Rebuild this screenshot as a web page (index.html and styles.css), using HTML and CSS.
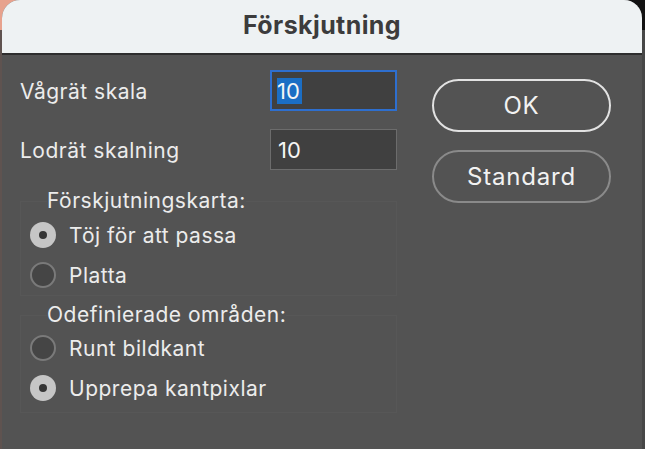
FILE: index.html
```html
<!DOCTYPE html>
<html>
<head>
<meta charset="utf-8">
<link rel="stylesheet" href="styles.css">
</head>
<body>
<div class="page">
  <div class="dialog">
    <div class="titlebar">Förskjutning</div>
    <div class="content">
      <div class="form">
        <div class="row">
          <span class="label">Vågrät skala</span>
          <div class="field focused"><span class="sel">10</span></div>
        </div>
        <div class="row row2">
          <span class="label">Lodrät skalning</span>
          <div class="field"><span>10</span></div>
        </div>
        <fieldset class="group g1">
          <legend>Förskjutningskarta:</legend>
          <div class="opt"><span class="radio on"></span><span>Töj för att passa</span></div>
          <div class="opt"><span class="radio"></span><span>Platta</span></div>
        </fieldset>
        <fieldset class="group g2">
          <legend>Odefinierade områden:</legend>
          <div class="opt"><span class="radio"></span><span>Runt bildkant</span></div>
          <div class="opt"><span class="radio on"></span><span>Upprepa kantpixlar</span></div>
        </fieldset>
      </div>
      <div class="buttons">
        <div class="btn primary">OK</div>
        <div class="btn">Standard</div>
      </div>
    </div>
  </div>
</div>
</body>
</html>
```
FILE: styles.css
```css
html, body {
  margin: 0;
  padding: 0;
}
body {
  width: 645px;
  height: 449px;
  overflow: hidden;
  font-family: Inter, "Liberation Sans", sans-serif;
}
.page {
  width: 645px;
  height: 449px;
  background:
    linear-gradient(to right, #e7a28d 0 50%, #121212 50% 100%) top / 100% 30px no-repeat,
    linear-gradient(to right, #5f5350 0 2px, #535353 2px 642px, #474747 642px);
}
.dialog {
  margin-left: 2px;
  width: 640px;
  height: 449px;
  border-radius: 18px 18px 0 0;
  overflow: hidden;
  background: #535353;
}
.titlebar {
  height: 55px;
  box-sizing: border-box;
  background: #eef2f3;
  border-bottom: 2px solid #2e2e2e;
  display: flex;
  align-items: center;
  justify-content: center;
  font-size: 25px;
  font-weight: 700;
  letter-spacing: 0.4px;
  color: #3c3c3c;
  padding-bottom: 4px;
}
.content {
  display: flex;
  padding: 15px 0 0 18px;
  color: #ececec;
  font-size: 21px;
  letter-spacing: 0.5px;
}
.form {
  width: 377px;
}
.row {
  display: flex;
  justify-content: space-between;
  align-items: center;
  height: 41px;
}
.row2 {
  margin-top: 18px;
}
.label {
  padding-top: 1px;
}
.field {
  width: 127px;
  height: 41px;
  box-sizing: border-box;
  border: 1px solid #6c6c6c;
  background: #404040;
  display: flex;
  align-items: center;
  padding-left: 7px;
  color: #f5f5f5;
  font-size: 22px;
  letter-spacing: 0;
}
.field.focused {
  border: 2px solid #2e6fcf;
  padding-left: 5px;
}
.sel {
  background: #1b6ec4;
  line-height: 26px;
  padding-right: 2px;
}
.group {
  margin: 0;
  padding: 0;
  border: 1px solid #575757;
  min-width: 0;
}
.group legend {
  margin-left: 26px;
  padding: 0;
  line-height: 24px;
}
.g1 {
  margin-top: 19px;
  padding: 2px 0 0;
}
.g2 {
  margin-top: 7px;
  padding: 1px 0 4px;
}
.opt {
  display: flex;
  align-items: center;
  height: 40px;
  padding-left: 9px;
  gap: 13px;
}
.radio {
  width: 26px;
  height: 26px;
  box-sizing: border-box;
  border-radius: 50%;
  border: 2px solid #7a7a7a;
  background: #454545;
  display: flex;
  align-items: center;
  justify-content: center;
  flex: none;
}
.radio.on {
  border: none;
  background: #c6c6c6;
}
.radio.on::after {
  content: "";
  width: 8px;
  height: 8px;
  border-radius: 50%;
  background: #363636;
}
.buttons {
  margin-left: 35px;
  margin-top: 9px;
  display: flex;
  flex-direction: column;
  gap: 18px;
}
.btn {
  width: 179px;
  height: 53px;
  box-sizing: border-box;
  border-radius: 27px;
  border: 2px solid #8a8a8a;
  display: flex;
  align-items: center;
  justify-content: center;
  font-size: 24px;
  letter-spacing: 0.8px;
  color: #f2f2f2;
}
.btn.primary {
  border-color: #e2e2e2;
}
```
